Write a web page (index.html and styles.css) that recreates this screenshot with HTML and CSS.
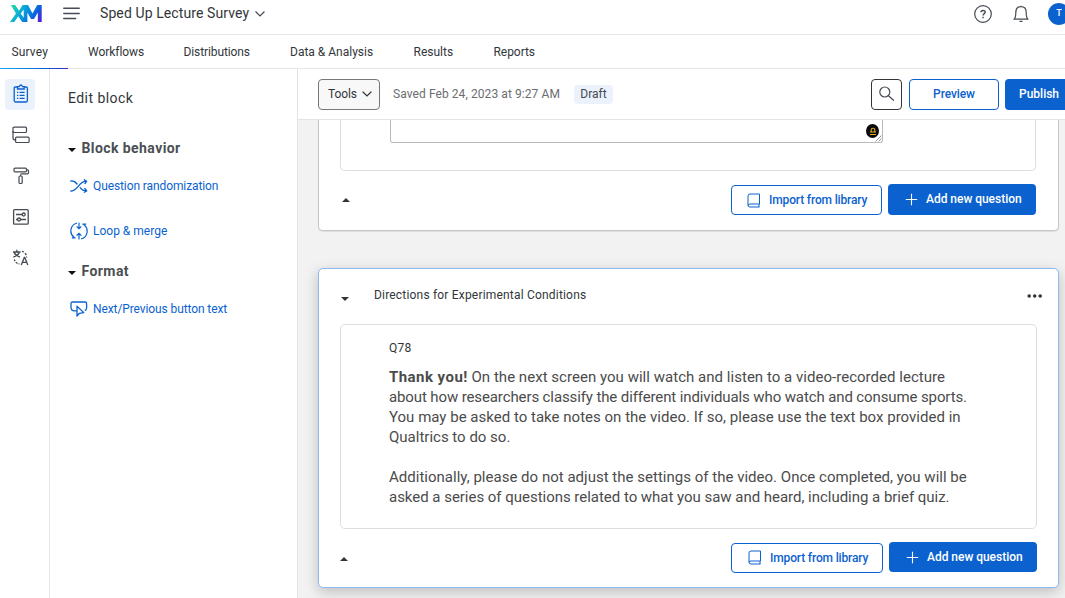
FILE: index.html
```html
<!DOCTYPE html>
<html lang="en">
<head>
<meta charset="utf-8">
<title>Sped Up Lecture Survey</title>
<link rel="stylesheet" href="styles.css">
</head>
<body>
<header class="topbar">
  <svg class="logo" width="32" height="18" viewBox="0 0 32 18" fill="none">
    <defs><linearGradient id="xm" gradientUnits="userSpaceOnUse" x1="3" y1="0" x2="31" y2="17"><stop offset="0" stop-color="#21d8a8"/><stop offset=".35" stop-color="#08a5dc"/><stop offset=".7" stop-color="#0768dd"/><stop offset="1" stop-color="#5a18d8"/></linearGradient></defs>
    <path fill="url(#xm)" d="M.8 0H5.200L9 5.800L12.600 0H18L22.500 8.500L27.200 0H31.700V17H27.800V7.500L24 14H21L17.400 7.500V17H12.200L8.200 11.300L4.300 17H0L6 8.400ZM13.700 4.400L10.700 8.500L13.700 12.800Z"/>
  </svg>
  <svg class="burger" width="17" height="13" viewBox="0 0 17 13" stroke="#454b52" stroke-width="1.500" stroke-linecap="round"><path d="M.8 1.300H16.200M.8 6.400H16.200M.8 11.500H12.600"/></svg>
  <span class="project">Sped Up Lecture Survey</span>
  <svg class="chev" width="10" height="6" viewBox="0 0 10 6" fill="none" stroke="#454b52" stroke-width="1.200" stroke-linecap="round"><path d="M.8.8 5 4.900 9.200.8"/></svg>
  <div class="account">
    <svg width="18" height="18" viewBox="0 0 18 18" fill="none" stroke="#454b52" stroke-width="1.200"><circle cx="9" cy="9" r="8.300"/><path stroke-width="1.400" d="M7 7.200C7 5 11.200 4.900 11.200 7.100C11.200 8.600 9.100 8.700 9.100 10.600M9.100 11.700V13.200"/></svg>
    <svg width="16" height="18" viewBox="0 0 16 18" fill="none" stroke="#454b52" stroke-width="1.200" stroke-linejoin="round"><path d="M8 .7V1.600M1 14.200C2.700 12.800 2.800 11 2.800 7.400C2.800 4 4.800 1.700 8 1.700S13.200 4 13.200 7.400C13.200 11 13.300 12.800 15 14.200ZM6.500 16.300H9.500"/></svg>
    <span class="avatar">T</span>
  </div>
</header>
<nav class="tabs">
  <span class="tab tab-on">Survey</span><span class="tab t-work">Workflows</span><span class="tab t-dist">Distributions</span><span class="tab t-data">Data &amp; Analysis</span><span class="tab t-res">Results</span><span class="tab t-rep">Reports</span>
</nav>
<div class="workspace">
  <aside class="rail">
    <span class="rail-item rail-on"><svg width="16" height="20" viewBox="0 0 16 20" fill="none" stroke="#0b62cf" stroke-width="1.300"><path d="M4.500 3H2.500Q1.200 3 1.200 4.300V16.600Q1.200 18 2.500 18H13Q14.400 18 14.400 16.600V4.300Q14.400 3 13 3H11.200M4.500 5V2.600H6.200Q7.900-.6 9.500 2.600H11.200V5ZM4 8.300H5.300M6.600 8.300H11.600M4 11.300H5.300M6.600 11.300H11.600M4 14.300H5.300M6.600 14.300H11.600"/></svg></span>
    <span class="rail-item"><svg width="18" height="18" viewBox="0 0 18 18" fill="none" stroke="#454b52" stroke-width="1.200"><rect x="1" y="1.200" width="13.500" height="5.300" rx="1"/><rect x="3.600" y="11.200" width="13.500" height="5.300" rx="1"/><path d="M1 5V12Q1 14 3.600 14"/></svg></span>
    <span class="rail-item"><svg width="18" height="18" viewBox="0 0 18 18" fill="none" stroke="#454b52" stroke-width="1.200"><rect x="2" y="1.200" width="12.500" height="3.600" rx="1"/><path d="M14.500 2.800H15.500Q16.500 2.800 16.500 3.800V5.800Q16.500 6.800 15.500 6.800H9.500Q8.500 6.800 8.500 8.800"/><rect x="7" y="9" width="3.200" height="7.500" rx="1"/></svg></span>
    <span class="rail-item"><svg width="18" height="18" viewBox="0 0 18 18" fill="none" stroke="#454b52" stroke-width="1.300"><rect x="1.600" y="1.600" width="14.600" height="14.600" rx="1"/><path d="M4 6.500H10M4 11.500H5.500M8.500 11.500H14"/><circle cx="11.700" cy="6.500" r="1.500"/><circle cx="7" cy="11.500" r="1.500"/></svg></span>
    <span class="rail-item"><svg width="18" height="18" viewBox="0 0 18 18" fill="none" stroke="#454b52" stroke-width="1.300"><path d="M4.800.8V3M1 3H8.600M2.200 3.600Q4 7 8 8M7.200 3.600Q5.600 7 1.400 8M10 2.300 11.800 2.900M13 4.200 14.300 6M14.600 7.500V8.500M2.300 10.500 3 12.200M3.800 13.300 5.500 14.500M6.500 14.900H7.500M9.300 16 12.300 8.500H12.800L15.800 16M10.400 13.400H14.700"/></svg></span>
  </aside>
  <aside class="panel">
    <h1 class="panel-title">Edit block</h1>
    <h2 class="group"><i class="caret"></i>Block behavior</h2>
    <a class="option"><svg width="18" height="14" viewBox="0 0 18 14" fill="none" stroke="#0b62cf" stroke-width="1.300" stroke-linecap="round" stroke-linejoin="round"><path d="M.8 2Q4.500 1.600 7 5M10.200 8.700Q12.500 12 16.500 12M.8 12C8 12 8.500 2.200 16.500 2.200M14.300.8 16.700 2.200 15 4.500M14.800 9.500 16.700 12 14.300 13.300"/></svg><span class="tight">Question randomization</span></a>
    <a class="option loop"><svg width="18" height="18" viewBox="0 0 18 18" fill="none" stroke="#0b62cf" stroke-width="1.200" stroke-linecap="round"><path d="M6.500 1.200A8 8 0 0 0 4 15.200M2.300 15.800H5.200M11.500 16.800A8 8 0 0 0 14 2.800M12.800 2.200H15.700M9 1V6.500M9 17V11.500M7 4.800 9 6.700 11 4.800M7 13.200 9 11.300 11 13.200"/></svg><span>Loop &amp; merge</span></a>
    <h2 class="group format"><i class="caret"></i>Format</h2>
    <a class="option"><svg width="18" height="16" viewBox="0 0 18 16" fill="none" stroke="#0b62cf" stroke-width="1.300" stroke-linejoin="round"><path d="M6.300 9.800H4.500Q1 9.800 1 6.300V2.500Q1 1 2.500 1H15Q16.600 1 16.600 2.500V7Q16.600 9 14.700 9.500M7 5.200V15L9.400 12.300 13.800 11.600Z"/></svg><span class="tight">Next/Previous button text</span></a>
  </aside>
  <main class="editor">
    <div class="toolbar">
      <button class="tools">Tools<svg width="10" height="6" viewBox="0 0 10 6" fill="none" stroke="#32363a" stroke-width="1.200" stroke-linecap="round"><path d="M1 1 5 4.900 9 1"/></svg></button>
      <span class="saved">Saved Feb 24, 2023 at 9:27 AM</span>
      <span class="draft">Draft</span>
      <button class="search"><svg width="16" height="16" viewBox="0 0 16 16" fill="none" stroke="#454b52" stroke-width="1.200" stroke-linecap="round"><circle cx="5.800" cy="6" r="5"/><path d="M9.500 9.700 14.500 14.300"/></svg></button>
      <button class="preview">Preview</button>
      <button class="publish">Publish</button>
    </div>
    <div class="canvas">
      <section class="block block-cut">
        <div class="question question-cut">
          <div class="answer">
            <span class="badge"><svg width="8" height="9" viewBox="0 0 8 9" fill="none" stroke="#e2a91c" stroke-width="1.100"><path d="M2.200 4.500V2.800Q2.200 1.300 4 1.300T5.800 2.800V4.500M1 5H7M1 7.500H7"/></svg></span>
            <svg class="grip" width="7" height="7" viewBox="0 0 7 7" stroke="#777" stroke-width=".8"><path d="M.5 6.500 6.500.5M3.500 6.500 6.500 3.500"/></svg>
          </div>
        </div>
        <div class="actions">
          <i class="up"></i>
          <button class="import"><svg width="14" height="15" viewBox="0 0 14 15" fill="none" stroke="#0b62cf" stroke-width="1"><path d="M12.500 11V1H3Q1 1 1 3V12Q1 14 3 14H12.500M12.500 11H3Q1 11 1 12.500M12 11V14"/></svg>Import from library</button>
          <button class="add"><svg width="13" height="13" viewBox="0 0 13 13" stroke="#fff" stroke-width="1.100"><path d="M.8 6.500H12.200M6.500.8V12.200"/></svg>Add new question</button>
        </div>
      </section>
      <section class="block block-on">
        <div class="block-head"><i class="down"></i><span class="block-name">Directions for Experimental Conditions</span>
          <svg class="more" width="16" height="4" viewBox="0 0 16 4" fill="#32363a"><circle cx="2.200" cy="2" r="1.800"/><circle cx="7.700" cy="2" r="1.800"/><circle cx="13.200" cy="2" r="1.800"/></svg></div>
        <div class="question">
          <div class="qid">Q78</div>
          <p class="prose"><b>Thank you!</b> <span class="line-open">On the next screen you will watch and listen to a video-recorded lecture</span><br><span class="line-tight">about how researchers classify the different individuals who watch and consume sports.</span><br><span class="line-even">You may be asked to take notes on the video. If so, please use the text box provided in</span><br>Qualtrics to do so.</p>
          <p class="prose"><span class="line-even">Additionally, please do not adjust the settings of the video. Once completed, you will be</span><br><span class="line-close">asked a series of questions related to what you saw and heard, including a brief quiz.</span></p>
        </div>
        <div class="actions">
          <i class="up"></i>
          <button class="import"><svg width="14" height="15" viewBox="0 0 14 15" fill="none" stroke="#0b62cf" stroke-width="1"><path d="M12.500 11V1H3Q1 1 1 3V12Q1 14 3 14H12.500M12.500 11H3Q1 11 1 12.500M12 11V14"/></svg>Import from library</button>
          <button class="add"><svg width="13" height="13" viewBox="0 0 13 13" stroke="#fff" stroke-width="1.100"><path d="M.8 6.500H12.200M6.500.8V12.200"/></svg>Add new question</button>
        </div>
      </section>
    </div>
  </main>
</div>
</body>
</html>
```

FILE: styles.css
```css
* { box-sizing: border-box; }
body { margin: 0; height: 598px; overflow: hidden; background: #fff; color: #32363a; font: 12px/16px Roboto, "Open Sans", sans-serif; display: flex; flex-direction: column; white-space: nowrap; }
svg { flex: none; display: block; }
button { font: 500 12px/16px Roboto, sans-serif; padding: 0; border-radius: 4px; display: flex; align-items: center; flex: none; }
h1, h2, p { margin: 0; font-weight: 400; }

.topbar { height: 35px; flex: none; border-bottom: 1px solid #e6e6e6; display: flex; align-items: center; padding: 0 0 7px 10px; }
.burger { margin-left: 21px; }
.project { margin: 0 0 2px 20px; width: 155px; font-size: 14px; letter-spacing: .1px; }
.account { margin-left: auto; display: flex; align-items: center; width: 91px; }
.account svg:nth-child(2) { margin-left: 21px; }
.avatar { margin-left: 19px; width: 22px; height: 22px; flex: none; border-radius: 50%; background: #0b62cf; color: #fff; font: 500 9px/21px Roboto, sans-serif; text-align: center; }

.tabs { height: 34px; flex: none; border-bottom: 1px solid #e6e6e6; display: flex; line-height: 34px; letter-spacing: -.05px; }
.tab { height: 34px; flex: none; }
.tab-on { width: 68px; padding-left: 11.500px; letter-spacing: .15px; border-bottom: 1px solid; border-image: linear-gradient(90deg, #12aaf0, #0b5dd5 65%, #4424ba) 1; }
.t-work { margin-left: 20px; width: 95.500px; }
.t-dist { width: 106.500px; letter-spacing: -.1px; }
.t-data { width: 123.500px; letter-spacing: 0; }
.t-res { width: 80px; letter-spacing: 0; }

.workspace { flex: 1; min-height: 0; display: flex; }
.rail { width: 50px; flex: none; border-right: 1px solid #e6e6e6; padding: 10px 0 0 5px; display: flex; flex-direction: column; gap: 10px; }
.rail-item { width: 30px; height: 31px; border-radius: 4px; display: flex; align-items: center; justify-content: center; padding: 0 0 1px 1px; }
.rail-on { background: #ebf2fb; }
.panel { width: 248px; flex: none; border-right: 1px solid #e0e2e4; padding: 19px 0 0 18px; }
.panel-title { font-size: 14px; line-height: 20px; letter-spacing: .45px; }
.group { display: flex; align-items: center; margin-top: 30px; height: 20px; font-size: 14px; font-weight: 700; letter-spacing: .42px; color: #4b4f54; }
.caret { border: 4px solid transparent; border-top-color: #111; border-bottom: 0; margin: 3px 5.500px 0 0; }
.option { display: flex; align-items: center; height: 20px; margin-top: 18px; padding-left: 2px; color: #0b62cf; gap: 5px; }
.tight { letter-spacing: -.1px; }
.loop { margin-top: 25px; }
.format { margin-top: 20px; }

.editor { flex: 1; min-width: 0; display: flex; flex-direction: column; overflow: hidden; }
.toolbar { height: 51px; flex: none; border-bottom: 1px solid #e3e3e3; display: flex; align-items: center; padding-left: 20px; }
.tools { width: 62px; height: 31px; border: 1px solid #777; background: #f8f8f8; color: #32363a; padding-left: 9px; gap: 5px; font-weight: 400; letter-spacing: -.1px; }
.tools { justify-content: space-between; padding-right: 8px; }
.saved { margin-left: 13px; width: 181px; color: #6a6d70; letter-spacing: .08px; }
.draft { width: 39px; height: 19px; border-radius: 4px; background: #ebf2fb; text-align: center; line-height: 19px; color: #454b52; }
.search { margin-left: auto; width: 31px; height: 31px; background: #fff; border: 1px solid #32363a; justify-content: center; }
.preview { margin-left: 7px; width: 90px; height: 31px; background: #fff; border: 1px solid #0b62cf; color: #0b62cf; justify-content: center; letter-spacing: -.1px; }
.publish { margin-left: 6px; width: 60px; height: 31px; border: 0; border-radius: 4px 0 0 4px; background: #0b62cf; color: #fff; padding-left: 14px; }

.canvas { flex: 1; min-height: 0; background: #f2f2f2; padding-left: 20px; overflow: hidden; }
.block { width: 741px; background: #fff; border: 1px solid #c6c6c6; border-radius: 5px; padding: 0 21px; }
.block-cut { height: 111px; border-top: 0; border-radius: 0 0 5px 5px; box-shadow: 0 1px 1px #ddd; }
.block-on { height: 320px; margin-top: 37px; border-color: #8cbaf0; box-shadow: 0 4px 14px rgba(0,0,0,.22); }
.question { border: 1px solid #dedede; border-radius: 5px; height: 205px; width: 697px; padding: 15px 0 0 48px; }
.question-cut { height: 51px; width: 696px; border-top: 0; border-radius: 0 0 5px 5px; padding: 0 0 0 49px; }
.answer { position: relative; width: 493px; height: 23px; border: 1px solid #b9b9b9; border-top: 0; border-radius: 0 0 3px 3px; }
.badge { position: absolute; right: 3px; top: 4px; width: 13px; height: 14px; border-radius: 50%; background: #080a0c; display: flex; align-items: center; justify-content: center; }
.grip { position: absolute; right: 0; bottom: 0; }
.actions { display: flex; align-items: flex-start; padding: 13px 0 0; }
.up { border: 4px solid transparent; border-bottom-color: #32363a; border-top: 0; margin-top: 15px; }
.block-cut .up { margin: 14px 0 0 2px; }
.import { margin: 1px 0 0 auto; width: 151px; height: 30px; background: #fff; border: 1px solid #0b62cf; color: #0b62cf; padding-left: 15px; gap: 8px; letter-spacing: -.15px; }
.add { margin-left: 6px; width: 148px; height: 31px; border: 0; background: #0b62cf; color: #fff; padding: 0 0 1px 17px; gap: 8px; letter-spacing: -.03px; }
.block-cut .actions { padding-right: 1px; }
.block-on .import { width: 152px; padding: 0 0 1px 16px; }
.block-on .add { height: 30px; padding-bottom: 0; }
.block-head { height: 55px; display: flex; align-items: flex-start; padding-top: 18px; }
.down { border: 4px solid transparent; border-top-color: #32363a; border-bottom: 0; margin: 10px 25px 0 1px; }
.block-name { letter-spacing: .19px; }
.more { margin: 7px -6px 0 auto; }
.qid { margin-bottom: 11px; letter-spacing: .2px; }
.prose { font-size: 15px; line-height: 20px; color: #4b4b4b; margin-bottom: 20px; }
.prose b { letter-spacing: .45px; }
.line-open { letter-spacing: .03px; }
.line-tight { letter-spacing: -.115px; }
.line-even { letter-spacing: .015px; }
.line-close { letter-spacing: -.025px; }
```
